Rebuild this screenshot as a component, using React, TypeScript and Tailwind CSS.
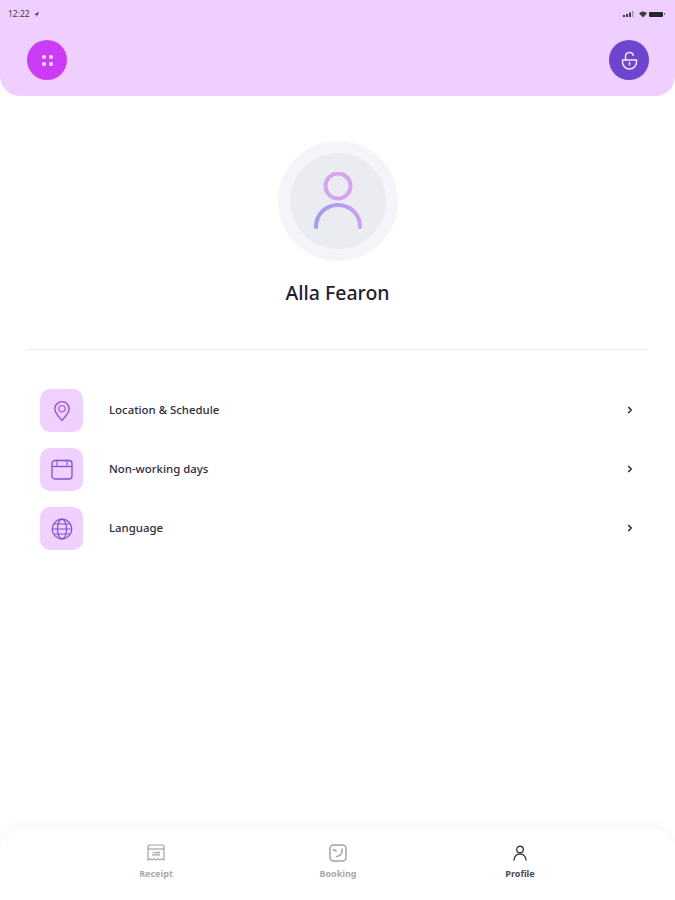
import { ChevronRight } from "lucide-react";
import type { ReactNode } from "react";

function PinIcon() {
  return (
    <svg width="18" height="22" viewBox="0 0 20 24" fill="none" stroke="#8a4fd8" strokeWidth="1.500">
      <path d="M10 22.500c-1-1.600-8-7.600-8-13a8 8 0 0 1 16 0c0 5.400-7 11.400-8 13z" strokeLinejoin="round" />
      <circle cx="10" cy="9.500" r="3.500" stroke="#b06ae8" />
    </svg>
  );
}

function CalendarIcon() {
  return (
    <svg width="22" height="21" viewBox="0 0 22 21" fill="none" stroke="#7d50dc" strokeWidth="1.300">
      <path d="M1 4.500a3 3 0 0 1 3-3h14a3 3 0 0 1 3 3V17a3 3 0 0 1-3 3H4a3 3 0 0 1-3-3z" />
      <path d="M1 7.500h20" />
      <path d="M6 0.500V7.500M16 0.500V7.500" stroke="#a55fe6" />
    </svg>
  );
}

function GlobeIcon() {
  return (
    <svg width="22" height="22" viewBox="0 0 22 22" fill="none" stroke="#7d50dc" strokeWidth="1.200">
      <circle cx="11" cy="11" r="9.800" />
      <ellipse cx="11" cy="11" rx="4.500" ry="9.800" />
      <path d="M1.200 11h19.600M2.600 6h16.800M2.600 16h16.800" />
    </svg>
  );
}

function ReceiptIcon() {
  return (
    <svg width="18" height="18" viewBox="0 0 18 18" fill="none" stroke="#a3a3a3" strokeWidth="1.200">
      <path d="M1 16V3a2 2 0 0 1 2-2h12a2 2 0 0 1 2 2v13l-2-1.200-2 1.200-2-1.200-2 1.200-2-1.200-2 1.200-2-1.200z" strokeLinejoin="round" />
      <path d="M1 5h16" />
      <rect x="5" y="7.500" width="8" height="4" fill="#dcdcdc" stroke="none" />
      <path d="M8 8.500h5M5 11h8" strokeWidth="0.900" />
    </svg>
  );
}

function BookingIcon() {
  return (
    <svg width="18" height="18" viewBox="0 0 18 18" fill="none" stroke="#a3a3a3" strokeWidth="1.500">
      <rect x="1" y="1" width="16" height="16" rx="3.500" />
      <path d="M4.500 5.500l2.500 1.500M13 5v2c0 3-2 5-5.500 5.500" strokeLinecap="round" />
    </svg>
  );
}

function ProfileIcon() {
  return (
    <svg width="14" height="16" viewBox="0 0 14 16" fill="none" stroke="#3b3b47" strokeWidth="1.400">
      <circle cx="7" cy="4.500" r="3.300" />
      <path d="M1 15c0-3.500 2.700-6 6-6s6 2.500 6 6" strokeLinecap="round" />
    </svg>
  );
}

function MenuRow({ icon, label }: { icon: ReactNode; label: string }) {
  return (
    <div className="flex h-[43px] items-center">
      <div className="flex h-[43px] w-[43px] items-center justify-center rounded-[10px] bg-[#efd0ff]">{icon}</div>
      <span className="ml-[26px] flex-1 -translate-y-px text-[11.400px] font-medium text-[#2d2b3f]">{label}</span>
      <ChevronRight className="mr-[1px] h-[10px] w-[10px] -translate-y-px text-[#2d2b3f]" strokeWidth={4} />
    </div>
  );
}

function Tab({ icon, label, active }: { icon: ReactNode; label: string; active?: boolean }) {
  return (
    <div className="flex w-[60px] flex-col items-center gap-[5px]">
      <div className="flex h-[18px] items-center justify-center">{icon}</div>
      <span className={active ? "text-[9px] font-bold text-[#4a4a55]" : "text-[9px] font-bold text-[#a8a8a8]"}>{label}</span>
    </div>
  );
}

export default function App() {
  return (
    <div className="flex h-[900px] w-[675px] flex-col overflow-hidden bg-white font-['Noto_Sans',sans-serif]">
      <header className="h-[96px] rounded-b-[20px] bg-[#efcfff] pt-[9px] pr-[26px] pl-[27px]">
        <div className="-mr-[16px] -ml-[19px] flex h-[10px] items-center justify-between">
          <div className="flex items-center gap-[4px] text-[8.500px] text-[#3f3a46]">
            <span>12:22</span>
            <svg width="5" height="5" viewBox="0 0 6 6" fill="#2b2b33">
              <path d="M6 0L0 3h3v3z" />
            </svg>
          </div>
          <div className="flex items-center">
            <svg width="11" height="6" viewBox="0 0 11 6" fill="#3a3a42">
              <rect x="0" y="4" width="2" height="2" />
              <rect x="3" y="3" width="2" height="3" />
              <rect x="6" y="1.500" width="2" height="4.500" />
              <rect x="9" y="0" width="1.500" height="6" opacity="0.400" />
            </svg>
            <svg width="8" height="7" viewBox="0 0 9 7" fill="#3a3a42" className="ml-[5px]">
              <path d="M0 2a6.500 6.500 0 0 1 9 0L4.500 7z" />
            </svg>
            <div className="ml-[2px] h-[5px] w-[14px] rounded-[1px] bg-[#26262c]" />
            <div className="ml-[1px] h-[2px] w-[1px] bg-[#6a6670]" />
          </div>
        </div>
        <div className="mt-[21px] flex items-center justify-between">
          <button className="flex h-[40px] w-[40px] items-center justify-center rounded-full bg-[#cc3cf8]">
            <span className="grid grid-cols-2 gap-[3px]">
              <span className="h-[4px] w-[4px] rounded-full bg-[#f7e6ff]" />
              <span className="h-[4px] w-[4px] rounded-full bg-[#f7e6ff]" />
              <span className="h-[4px] w-[4px] rounded-full bg-[#f7e6ff]" />
              <span className="h-[4px] w-[4px] rounded-full bg-[#f7e6ff]" />
            </span>
          </button>
          <button className="flex h-[40px] w-[40px] items-center justify-center rounded-full bg-[#6d45cf]">
            <svg width="17" height="19" viewBox="0 0 17 19" fill="none" stroke="#f3e8ff" strokeWidth="1.500">
              <path d="M1.500 9h14v2a7 7 0 0 1-14 0z" strokeLinejoin="round" />
              <path d="M4.500 9V5.500a4 4 0 0 1 7.800-1.200" strokeLinecap="round" />
              <path d="M8.500 11.500v2.500" strokeLinecap="round" />
            </svg>
          </button>
        </div>
      </header>

      <section className="mt-[45px] flex flex-col items-center">
        <div className="flex h-[120px] w-[120px] items-center justify-center rounded-full bg-[#f5f4f9]">
          <div className="flex h-[96px] w-[96px] items-center justify-center rounded-full bg-[#ebebf2]">
            <svg width="50" height="58" viewBox="0 0 50 58" fill="none" strokeWidth="4" strokeLinecap="round">
              <defs>
                <linearGradient id="avatarBody" x1="0" y1="0" x2="1" y2="0">
                  <stop offset="0" stopColor="#9d9cf0" />
                  <stop offset="1" stopColor="#c9a0f2" />
                </linearGradient>
              </defs>
              <circle cx="25" cy="14" r="12.500" stroke="#d6a3f0" />
              <path d="M3 55c0-13 10-22 22-22s22 9 22 22" stroke="url(#avatarBody)" />
            </svg>
          </div>
        </div>
        <h1 className="mt-[18px] text-[19.500px] leading-[28px] font-medium text-[#1f1c33]">Alla Fearon</h1>
      </section>

      <div className="mx-[27px] mt-[42px] h-px bg-[#ececf0]" />

      <div className="mt-[39px] flex flex-col gap-4 pr-[39px] pl-[40px]">
        <MenuRow icon={<PinIcon />} label="Location & Schedule" />
        <MenuRow icon={<CalendarIcon />} label="Non-working days" />
        <MenuRow icon={<GlobeIcon />} label="Language" />
      </div>

      <div className="flex-1" />

      <nav className="h-[72px] rounded-t-[24px] bg-white pt-[16px] pr-[125px] pl-[126px] shadow-[0_-4px_10px_rgba(0,0,0,0.03)]">
        <div className="flex justify-between">
          <Tab icon={<ReceiptIcon />} label="Receipt" />
          <Tab icon={<BookingIcon />} label="Booking" />
          <Tab icon={<ProfileIcon />} label="Profile" active />
        </div>
      </nav>
    </div>
  );
}
